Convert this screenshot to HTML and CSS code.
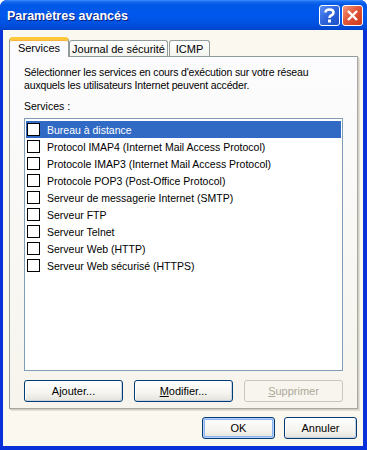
FILE: index.html
```html
<!DOCTYPE html>
<html lang="fr">
<head>
    <meta charset="UTF-8">
    <title>Paramètres avancés</title>
    <link rel="stylesheet" href="styles.css">
</head>
<body>
    <div class="window">
        <div class="titlebar">
            <span class="title">Paramètres avancés</span>
            <div class="caption-buttons">
                <div class="cap-btn help">
                    <svg width="13" height="15" viewBox="0 0 13 15">
                        <path d="M2.5 4.5 Q2.5 1.5 6.5 1.5 Q10.5 1.5 10.5 4.5 Q10.5 6.5 8 7.5 Q6.5 8.2 6.5 10" fill="none" stroke="#fff" stroke-width="2.6"/>
                        <rect x="5" y="11.5" width="3" height="3" fill="#fff"/>
                    </svg>
                </div>
                <div class="cap-btn close">
                    <svg width="13" height="13" viewBox="0 0 13 13">
                        <path d="M2 2 L11 11 M11 2 L2 11" stroke="#fff" stroke-width="2.4"/>
                    </svg>
                </div>
            </div>
        </div>

        <div class="client">
            <div class="tabs">
                <div class="tab active">Services</div>
                <div class="tab tab-journal">Journal de sécurité</div>
                <div class="tab tab-icmp">ICMP</div>
            </div>

            <div class="panel">
                <p class="intro">Sélectionner les services en cours d'exécution sur votre réseau auxquels les utilisateurs Internet peuvent accéder.</p>
                <div class="list-label">Services :</div>

                <div class="listbox">
                    <div class="row selected"><span class="check"></span>Bureau à distance</div>
                    <div class="row"><span class="check"></span>Protocol IMAP4 (Internet Mail Access Protocol)</div>
                    <div class="row"><span class="check"></span>Protocole IMAP3 (Internet Mail Access Protocol)</div>
                    <div class="row"><span class="check"></span>Protocole POP3 (Post-Office Protocol)</div>
                    <div class="row"><span class="check"></span>Serveur de messagerie Internet (SMTP)</div>
                    <div class="row"><span class="check"></span>Serveur FTP</div>
                    <div class="row"><span class="check"></span>Serveur Telnet</div>
                    <div class="row"><span class="check"></span>Serveur Web (HTTP)</div>
                    <div class="row"><span class="check"></span>Serveur Web sécurisé (HTTPS)</div>
                </div>

                <div class="list-actions">
                    <button class="btn">A<u>j</u>outer...</button>
                    <button class="btn"><u>M</u>odifier...</button>
                    <button class="btn" disabled><u>S</u>upprimer</button>
                </div>
            </div>

            <div class="footer">
                <button class="btn default">OK</button>
                <button class="btn">Annuler</button>
            </div>
        </div>
    </div>
</body>
</html>
```

FILE: styles.css
```css
body {
    margin: 0;
    font-family: "Liberation Sans", Arial, sans-serif;
    font-size: 10.5px;
    color: #000;
    background: #fff;
}
.window {
    width: 367px;
    height: 450px;
    box-sizing: border-box;
    display: flex;
    flex-direction: column;
    background: #0831d9;
    border-radius: 7px 7px 0 0;
    overflow: hidden;
}
.titlebar {
    height: 30px;
    flex: none;
    display: flex;
    align-items: center;
    justify-content: space-between;
    padding: 0 4px 0 7px;
    background: linear-gradient(#3d8dfa 0, #1367ef 2px, #0058e6 5px, #0058ee 14px, #0054e3 22px, #004ad8 27px, #0043c8 30px);
}
.title {
    color: #fff;
    font-weight: bold;
    font-size: 12.5px;
    text-shadow: 1px 1px 0 #0a1e7a;
    padding-top: 1px;
}
.caption-buttons {
    display: flex;
    gap: 2px;
}
.cap-btn {
    width: 19px;
    height: 19px;
    border: 1px solid #fff;
    border-radius: 3px;
    display: flex;
    align-items: center;
    justify-content: center;
}
.help {
    background: linear-gradient(135deg, #5a8ff5 0%, #2d63dc 50%, #1d4fc8 100%);
}
.close {
    background: linear-gradient(135deg, #f09a80 0%, #e2573a 45%, #cc3a1c 100%);
}
.client {
    flex: 1;
    margin: 0 4px 4px 3px;
    padding: 7px 5px 7px 6px;
    background: #fbf8ef;
    display: flex;
    flex-direction: column;
}
.tabs {
    display: flex;
    align-items: flex-end;
    height: 19px;
    position: relative;
    z-index: 1;
}
.tab {
    height: 16px;
    line-height: 16px;
    box-sizing: border-box;
    border: 1px solid #919b9c;
    border-bottom: none;
    border-radius: 3px 3px 0 0;
    background: linear-gradient(#ffffff, #f3f3ef);
    text-align: center;
    font-size: 11px;
}
.tab.active {
    width: 60px;
    height: 20px;
    line-height: 16px;
    margin-bottom: -1px;
    background: #fcfcfe;
    border-top: 3px solid #ffc83c;
    box-shadow: inset 0 1px 0 #f8b33a;
    border-radius: 4px 4px 0 0;
}
.tab-journal {
    width: 99px;
}
.tab-icmp {
    width: 41px;
    margin-left: 1px;
}
.panel {
    flex: 1;
    display: flex;
    flex-direction: column;
    border: 1px solid #919b9c;
    border-right-color: #a8a8a0;
    border-bottom-color: #a8a8a0;
    box-shadow: 1px 1px 0 #d0cfc8, 2px 2px 0 #e4e2d8;
    background: linear-gradient(#fcfcfe, #f6f4ec);
    padding: 9px 14px 6px 14px;
}
.intro {
    margin: 0;
    line-height: 13px;
    letter-spacing: -0.15px;
}
.list-label {
    margin-top: 8px;
    line-height: 13px;
}
.listbox {
    margin-top: 5px;
    flex: 1;
    border: 1px solid #7f9db9;
    background: #fff;
    padding: 2px 1px;
}
.row {
    height: 17px;
    display: flex;
    align-items: center;
    padding-left: 1px;
}
.row.selected {
    background: #316ac5;
    color: #fff;
}
.check {
    width: 11px;
    height: 11px;
    border: 1px solid #000;
    background: #fff;
    margin-right: 7px;
}
.list-actions {
    margin-top: 9px;
    display: grid;
    grid-template-columns: repeat(3, 1fr);
    gap: 11px;
}
.btn {
    height: 22px;
    padding: 0;
    font-family: "Liberation Sans", Arial, sans-serif;
    font-size: 11px;
    color: #000;
    border: 1px solid #003c74;
    border-radius: 3px;
    background: linear-gradient(#ffffff 0%, #f5f4ef 60%, #e3e2da 100%);
    box-shadow: inset -1px -1px 0 #c7d3e3, inset 1px 1px 0 #fff;
}
.btn:disabled {
    color: #aca899;
    border-color: #c9c7ba;
    background: #f7f5ee;
    box-shadow: none;
}
.btn.default {
    box-shadow: inset 0 0 0 1px #b9d1fa, inset 0 0 0 2px #8cb4f2;
}
.footer {
    margin-top: 8px;
    display: flex;
    justify-content: flex-end;
    gap: 9px;
    padding-right: 1px;
}
.footer .btn {
    width: 73px;
}
```
